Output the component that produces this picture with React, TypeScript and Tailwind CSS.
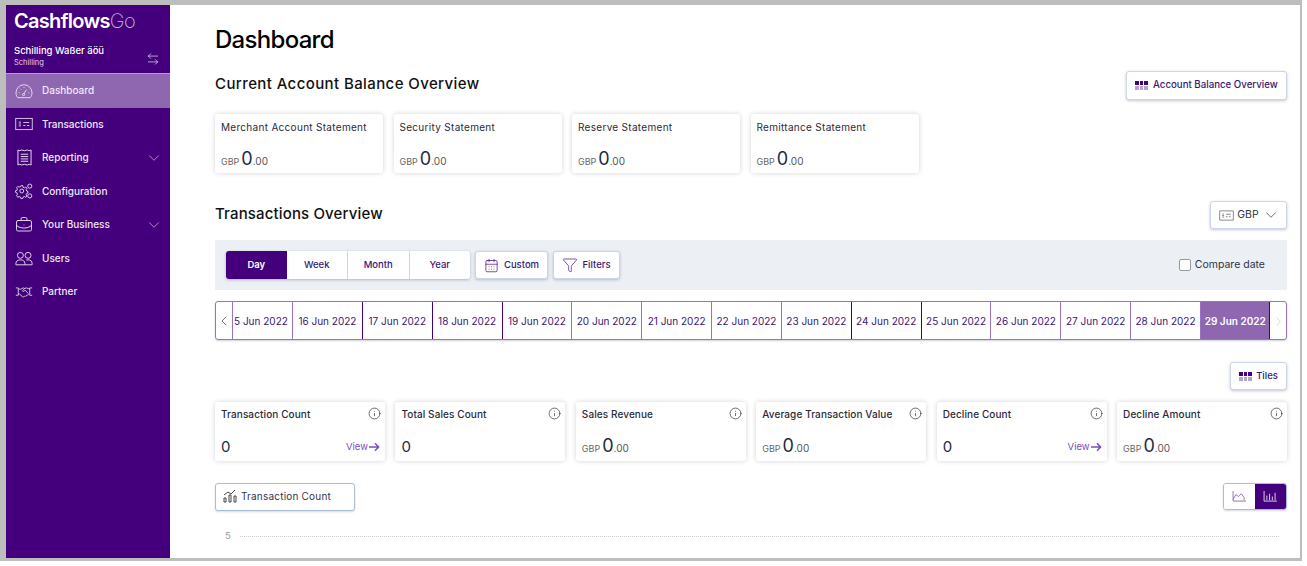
import { ArrowLeftRight, BriefcaseBusiness, CalendarDays, ChevronDown, ChevronLeft, ChevronRight, Funnel, Info } from 'lucide-react';

const purple = 'text-[#44007c]';

function CardIcon({ className }: { className?: string }) {
  return (
    <svg viewBox="0 0 24 18" fill="none" stroke="currentColor" strokeWidth="1.1" className={className}>
      <rect x="1" y="1.5" width="22" height="15" />
      <path d="M5 6.5h3M5 9h3M5 11.5h3M11 7h8M11 11h3M16 11h3" />
    </svg>
  );
}

function GaugeIcon() {
  return (
    <svg viewBox="0 0 20 18" fill="none" stroke="currentColor" strokeWidth="1" className="w-[18px] h-[16px]">
      <path d="M3 16.5C1.6 15 1 13 1 11a9 9 0 0 1 18 0c0 2-.6 4-2 5.5z" />
      <path d="M9.5 12.5l3.5-5M4 11h1M6 6.5l.6.6M10 4.5v1M15 11h1" />
      <circle cx="9.5" cy="13" r="1.2" />
    </svg>
  );
}

function ReceiptIcon() {
  return (
    <svg viewBox="0 0 16 18" fill="none" stroke="currentColor" strokeWidth="1" className="w-[15px] h-[17px]">
      <path d="M1 1l2 .8L5 1l3 .8L11 1l2 .8L15 1v16l-2-.8-2 .8-3-.8-3 .8-2-.8-2 .8z" />
      <path d="M4 5.5h8M4 8h8M4 10.5h8M4 13h8" />
    </svg>
  );
}

function GearsIcon() {
  return (
    <svg viewBox="0 0 20 18" fill="none" stroke="currentColor" strokeWidth="1" className="w-[18px] h-[16px]">
      <circle cx="7.5" cy="9" r="2.2" />
      <path d="M6.500 3h2l.4 1.700 1.600.7 1.500-.9 1.300 1.400-.9 1.500.6 1.600 1.500.4v1.800l-1.500.5-.6 1.500.9 1.500-1.300 1.400-1.500-.9-1.600.7-.4 1.600h-2l-.4-1.600-1.600-.7-1.500.9L1.700 14l.9-1.500L2 11l-1.500-.5V8.700L2 8.300l.6-1.600-.9-1.500L3 3.800l1.500.9 1.600-.7z" />
      <circle cx="16.500" cy="3.500" r="2.300" />
      <circle cx="16.500" cy="14.500" r="2.300" />
    </svg>
  );
}

function UsersIcon() {
  return (
    <svg viewBox="0 0 20 16" fill="none" stroke="currentColor" strokeWidth="1" className="w-[18px] h-[15px]">
      <circle cx="6" cy="4.500" r="3.300" />
      <circle cx="14.500" cy="4.500" r="3.300" />
      <path d="M1 15v-1.500C1 11 3 9.500 6 9.500s5 1.500 5 4V15zM12.500 9.700c.6-.1 1.300-.2 2-.2 2.700 0 4.500 1.500 4.500 4V15h-8" />
    </svg>
  );
}

function HandshakeIcon() {
  return (
    <svg viewBox="0 0 22 14" fill="none" stroke="currentColor" strokeWidth="1" className="w-[18px] h-[12px]">
      <path d="M1 2h3v9H1M21 2h-3v9h3" />
      <path d="M4 3.500h3l3-1.500 2 .7 2-.7 4 1.500M4 9.500h1.500l3.500 3 1.500.5 1-.8 1 .3 1-1 1 0 .8-1 1.700-1" />
      <path d="M12 2.700L9 5.500c.6 1 1.800 1 2.500.2l1-1 3.500 4" />
    </svg>
  );
}

function TilesIcon() {
  return (
    <span className="grid grid-cols-3 gap-[1px] w-[13px]">
      <span className="h-[4px] bg-[#44007c]" />
      <span className="h-[4px] bg-[#44007c]" />
      <span className="h-[4px] bg-[#44007c]" />
      <span className="h-[4px] bg-[#b9a0d2]" />
      <span className="h-[4px] bg-[#b9a0d2]" />
      <span className="h-[4px] bg-[#b9a0d2]" />
    </span>
  );
}

const navItems = [
  { label: 'Dashboard', icon: <GaugeIcon />, active: true },
  { label: 'Transactions', icon: <CardIcon className="w-[18px] h-[14px]" /> },
  { label: 'Reporting', icon: <ReceiptIcon />, caret: true },
  { label: 'Configuration', icon: <GearsIcon /> },
  { label: 'Your Business', icon: <BriefcaseBusiness className="w-[18px] h-[18px]" strokeWidth={1.2} />, caret: true },
  { label: 'Users', icon: <UsersIcon /> },
  { label: 'Partner', icon: <HandshakeIcon /> },
];

const statements = ['Merchant Account Statement', 'Security Statement', 'Reserve Statement', 'Remittance Statement'];

const dates = [
  { label: '16 Jun 2022', dark: true },
  { label: '17 Jun 2022', dark: true },
  { label: '18 Jun 2022', dark: true },
  { label: '19 Jun 2022', dark: false },
  { label: '20 Jun 2022', dark: false },
  { label: '21 Jun 2022', dark: false },
  { label: '22 Jun 2022', dark: false },
  { label: '23 Jun 2022', dark: true },
  { label: '24 Jun 2022', dark: true },
  { label: '25 Jun 2022', dark: false },
  { label: '26 Jun 2022', dark: false },
  { label: '27 Jun 2022', dark: false },
  { label: '28 Jun 2022', dark: false },
];

const tiles = [
  { title: 'Transaction Count', view: true },
  { title: 'Total Sales Count' },
  { title: 'Sales Revenue', money: true },
  { title: 'Average Transaction Value', money: true },
  { title: 'Decline Count', view: true },
  { title: 'Decline Amount', money: true },
];

function Money() {
  return (
    <div className="flex items-baseline text-[#1f2a44]">
      <span className="text-[9px] text-[#666] mr-[2px]">GBP</span>
      <span className="text-[18px] leading-none">0</span>
      <span className="text-[10px] text-[#555]">.00</span>
    </div>
  );
}

export default function App() {
  return (
    <div className="w-[1307px] h-[566px] bg-white overflow-hidden font-['Inter',sans-serif] text-[#1d1d2b]">
      <div className="flex w-[1302px] h-[561px] overflow-hidden border-solid border-[#bdbdbd] border-l-[6px] border-t-[5px] border-r-[2px] border-b-[3px]">
        {/* Sidebar */}
        <aside className="w-[164px] shrink-0 bg-[#44007c] text-white">
          <div className="pl-[8px] pt-[3px] text-[20px] leading-[26px] tracking-[-0.7px] font-semibold">
            Cashflows<span className="font-extralight text-[#c4b4dc]">Go</span>
          </div>
          <div className="flex items-center justify-between pl-[8px] pr-[10px] pt-[5px] h-[40px] border-b border-[#b79ad0]">
            <div>
              <div className="text-[9.500px] leading-[13px] font-medium">Schilling Waßer äöü</div>
              <div className="text-[7.500px] leading-[11px] text-[#e3d6ee]">Schilling</div>
            </div>
            <ArrowLeftRight className="w-[14px] h-[14px] mt-[6px] text-[#e8dff0]" strokeWidth={1.2} />
          </div>
          <nav>
            {navItems.map((item) => (
              <div
                key={item.label}
                className={`flex items-center h-[33.500px] pl-[9px] pr-[7px] ${item.active ? 'bg-[#8f67b1]' : ''}`}
              >
                <span className="w-[18px] flex justify-center text-[#ece4f3]">{item.icon}</span>
                <span className="ml-[9px] text-[10px] font-medium text-[#efe8f5] grow">{item.label}</span>
                {item.caret && <ChevronDown className="w-[18px] h-[18px] text-[#c9b6da]" strokeWidth={1} />}
              </div>
            ))}
          </nav>
        </aside>

        {/* Main */}
        <main className="grow pl-[45px] pr-[13px] min-w-0">
          <h1 className="text-[24px] leading-[30px] mt-[20px] font-medium tracking-[-0.7px] text-black">Dashboard</h1>

          <div className="flex items-start justify-between mt-[16px] h-[43px]">
            <h2 className="text-[15px] leading-[20px] font-medium mt-[3px] tracking-[0.4px] text-[#111]">Current Account Balance Overview</h2>
            <button className="flex items-center gap-[5px] h-[29px] w-[161px] pl-[8px] bg-white border border-[#cbd6e6] rounded-[3px] shadow-[0_1px_3px_rgba(60,70,110,0.3)] text-[9.700px] font-medium text-[#3a1675]">
              <TilesIcon />
              Account Balance Overview
            </button>
          </div>

          <div className="flex gap-[10.500px]">
            {statements.map((s) => (
              <div key={s} className="w-[168px] h-[59px] rounded-[3px] bg-white shadow-[0_0_5px_rgba(40,40,70,0.2)] pl-[6px] pt-[7px] flex flex-col justify-between pb-[4px]">
                <div className="text-[10px] leading-[12px] text-[#2a2a38] tracking-[0.3px]">{s}</div>
                <Money />
              </div>
            ))}
          </div>

          <div className="flex items-start justify-between mt-[28px] h-[39px]">
            <h2 className="text-[15px] leading-[20px] font-medium mt-[3px] tracking-[0.15px] text-[#111]">Transactions Overview</h2>
            <button className="flex items-center justify-between h-[28px] w-[77px] pl-[8px] pr-[6px] bg-white border border-[#cbd6e6] rounded-[3px] shadow-[0_1px_3px_rgba(60,70,110,0.3)] text-[10.500px] text-[#333]">
              <CardIcon className="w-[15px] h-[11px] text-[#555]" />
              GBP
              <ChevronDown className="w-[18px] h-[18px] text-[#444]" strokeWidth={1} />
            </button>
          </div>

          <div className="flex items-center h-[50px] bg-[#eceff4] pl-[11px] pr-[22px]">
            <div className="flex h-[28px] w-[244px] rounded-[3px] shadow-[0_1px_3px_rgba(60,70,110,0.35)] bg-white text-[9.500px] font-medium text-[#3a1675]">
              <div className="flex-1 flex items-center justify-center bg-[#44007c] text-white rounded-l-[3px] font-semibold">Day</div>
              <div className="flex-1 flex items-center justify-center border-r border-[#cbd6e6]">Week</div>
              <div className="flex-1 flex items-center justify-center border-r border-[#cbd6e6]">Month</div>
              <div className="flex-1 flex items-center justify-center">Year</div>
            </div>
            <button className="ml-[5px] flex items-center justify-center gap-[5px] h-[28px] w-[73px] bg-white rounded-[3px] border border-[#cbd6e6] shadow-[0_1px_3px_rgba(60,70,110,0.3)] text-[9.500px] font-medium text-[#3a1675]">
              <CalendarDays className={`w-[15px] h-[15px] ${purple}`} strokeWidth={1.1} />
              Custom
            </button>
            <button className="ml-[5px] flex items-center justify-center gap-[4px] h-[28px] w-[67px] bg-white rounded-[3px] border border-[#cbd6e6] shadow-[0_1px_3px_rgba(60,70,110,0.3)] text-[9.500px] font-medium text-[#3a1675]">
              <Funnel className={`w-[16px] h-[16px] ${purple}`} strokeWidth={1} />
              Filters
            </button>
            <label className="ml-auto flex items-center gap-[4px] text-[10.500px] text-[#2f3446]">
              <span className="w-[12px] h-[12px] bg-white border border-[#9a9a9a] rounded-[2px]" />
              Compare date
            </label>
          </div>

          <div className="flex h-[39px] mt-[11px] pt-[1px] border border-[#9a72bd] rounded-[3px] shadow-[0_1px_2px_rgba(60,70,110,0.25)] text-[10px] text-[#3a1675] overflow-hidden">
            <div className="w-[17px] shrink-0 flex items-center justify-center border-r border-[#9a72bd] -mt-[1px]">
              <ChevronLeft className="w-[16px] h-[16px] text-[#555]" strokeWidth={1.2} />
            </div>
            <div className="w-[60px] shrink-0 flex items-center pl-[1px] whitespace-nowrap border-r border-[#9a72bd] -mt-[1px] pt-[1px]">5 Jun 2022</div>
            {dates.map((d) => (
              <div key={d.label} className={`w-[69.850px] shrink-0 flex items-center justify-center whitespace-nowrap border-r -mt-[1px] pt-[1px] ${d.dark ? 'border-[#44007c]' : 'border-[#9a72bd]'}`}>
                {d.label}
              </div>
            ))}
            <div className="w-[69.500px] shrink-0 flex items-center justify-center whitespace-nowrap bg-[#8f67b1] text-white font-semibold border-r border-[#44007c] -mt-[1px] pt-[1px]">29 Jun 2022</div>
            <div className="grow flex items-center justify-center">
              <ChevronRight className="w-[15px] h-[15px] text-[#c9c9c9]" strokeWidth={1.2} />
            </div>
          </div>

          <div className="flex justify-end mt-[22px]">
            <button className="flex items-center justify-center gap-[4px] h-[28px] w-[57px] bg-white border border-[#cbd6e6] rounded-[3px] shadow-[0_1px_3px_rgba(60,70,110,0.3)] text-[9.500px] font-medium text-[#3a1675]">
              <TilesIcon />
              Tiles
            </button>
          </div>

          <div className="grid grid-cols-6 gap-[10.500px] mt-[12px]">
            {tiles.map((t) => (
              <div key={t.title} className="h-[59px] rounded-[3px] bg-white shadow-[0_0_5px_rgba(40,40,70,0.2)] pl-[6px] pr-[4px] pt-[5px] pb-[5px] flex flex-col justify-between">
                <div className="flex items-center justify-between">
                  <span className="text-[10px] font-medium leading-[12px] tracking-[0.1px] text-[#2a2a38]">{t.title}</span>
                  <Info className="w-[13px] h-[13px] text-[#333]" strokeWidth={1.3} />
                </div>
                {t.money ? (
                  <Money />
                ) : (
                  <div className="flex items-center justify-between">
                    <span className="text-[15px] leading-[18px] text-[#1f2a44]">0</span>
                    {t.view && (
                      <span className="flex items-center gap-[1px] text-[9.500px] text-[#7a4cc0] pr-[1px]">
                        View
                        <svg viewBox="0 0 12 10" fill="none" stroke="currentColor" strokeWidth="1.6" className="w-[11px] h-[10px]">
                          <path d="M0 5h10.500M6.500 1l4 4-4 4" />
                        </svg>
                      </span>
                    )}
                  </div>
                )}
              </div>
            ))}
          </div>

          <div className="flex items-start justify-between mt-[22px]">
            <button className="flex items-center gap-[4px] h-[28px] w-[140px] pl-[7px] pb-[2px] bg-white border border-[#a9bdda] rounded-[3px] shadow-[0_1px_2px_rgba(60,70,110,0.2)] text-[10px] text-[#33334d] tracking-[0.2px]">
              <svg viewBox="0 0 14 14" fill="none" stroke="#444" strokeWidth="1" className="w-[14px] h-[14px]">
                <path d="M1 13V9h2v4zM6 13V6h2v7zM11 13V7h2v6zM1 6l4-3 3 2 4-4" />
              </svg>
              Transaction Count
            </button>
            <div className="flex h-[27px] w-[64px] rounded-[3px] border border-[#a9bdda] shadow-[0_1px_2px_rgba(60,70,110,0.2)] overflow-hidden">
              <div className="flex-1 flex items-center justify-center bg-white">
                <svg viewBox="0 0 16 12" fill="none" stroke="#8f67b1" strokeWidth="1" className="w-[15px] h-[11px]">
                  <path d="M1 0v11h14M1 9l3-5 3 2 3-3 3 4v3" />
                </svg>
              </div>
              <div className="flex-1 flex items-center justify-center bg-[#44007c]">
                <svg viewBox="0 0 16 12" fill="none" stroke="#e6dbef" strokeWidth="1" className="w-[15px] h-[11px]">
                  <path d="M1 0v11h14M4 10V5M7 10V3M10 10V6M13 10V2" />
                </svg>
              </div>
            </div>
          </div>

          <div className="flex items-center mt-[20px] ml-[10px] mr-[8px] gap-[9px]">
            <span className="text-[9.500px] leading-[10px] text-[#999]">5</span>
            <div className="grow border-t border-dotted border-[#cfcfcf]" />
          </div>
        </main>
      </div>
    </div>
  );
}
